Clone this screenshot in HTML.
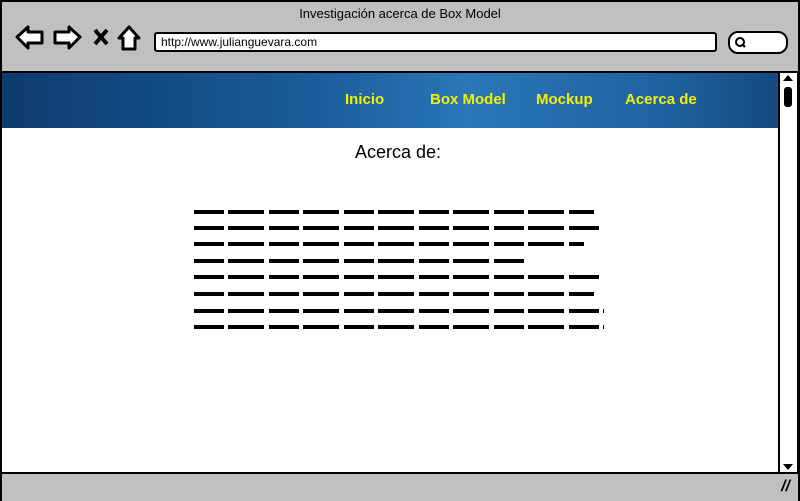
<!DOCTYPE html>
<html><head><style>
body{margin:0;width:800px;height:501px;overflow:hidden;font-family:"Liberation Sans",sans-serif;background:#fff;position:relative}
.frame{position:absolute;left:0;top:0;width:796px;height:497px;border:2px solid #000;background:#fff}
.top{position:absolute;left:2px;top:2px;width:796px;height:69px;background:#c0c0c0;border-bottom:2px solid #000}
.title{position:absolute;top:6px;width:800px;text-align:center;font-size:13px;color:#000}
.url{position:absolute;left:154px;top:32px;width:554px;height:16px;background:#fff;border:2px solid #000;border-radius:3px;font-size:12px;line-height:16px;padding-left:5px}
.search{position:absolute;left:728px;top:31px;width:56px;height:19px;background:#fff;border:2px solid #000;border-radius:10px}
.banner{position:absolute;left:2px;top:73px;width:776px;height:55px;background:linear-gradient(90deg,#0e3a6e,#1a5c9a 40%,#2a76b6 60%,#1f62a0 85%,#164a80);}
.nav{position:absolute;top:91px;color:#f4f000;font-size:15px;font-weight:bold}
.sb{position:absolute;left:778px;top:73px;width:17px;height:400px;background:#fff;border-left:2px solid #000;border-right:1px solid #000}
.bottom{position:absolute;left:2px;top:472px;width:796px;height:27px;background:#c0c0c0;border-top:2px solid #000}
.h{position:absolute;top:142px;width:796px;text-align:center;font-size:18px;left:0}
.ln{position:absolute;left:194px;height:4px;background:repeating-linear-gradient(90deg,#000 0 30px,transparent 30px 34px,#000 34px 70px,transparent 70px 75px);}
</style></head><body>
<div class="frame"></div>
<div class="top"></div>
<div class="title">Investigación acerca de Box Model</div>
<svg style="position:absolute;left:14px;top:24px" width="130" height="28" viewBox="0 0 130 28">
<path d="M3 13 L14 3 L14 8 L28 8 L28 19 L14 19 L14 24 Z" fill="#fff" stroke="#000" stroke-width="3" stroke-linejoin="round"/>
<path d="M66 13 L55 3 L55 8 L41 8 L41 19 L55 19 L55 24 Z" fill="#fff" stroke="#000" stroke-width="3" stroke-linejoin="round"/>
<path d="M81 6 L93 20 M93 6 L81 20" stroke="#000" stroke-width="4"/>
<path d="M115 3 L105 14 L109 14 L109 25 L121 25 L121 14 L125 14 Z" fill="#fff" stroke="#000" stroke-width="3" stroke-linejoin="round"/>
</svg>
<div class="url">http://www.julianguevara.com</div>
<div class="search"><svg width="20" height="19"><circle cx="10" cy="9" r="4" fill="none" stroke="#000" stroke-width="2"/><path d="M12 11 L15 14" stroke="#000" stroke-width="2"/></svg></div>
<div class="banner"></div>
<div class="nav" style="left:345px">Inicio</div>
<div class="nav" style="left:430px">Box Model</div>
<div class="nav" style="left:536px">Mockup</div>
<div class="nav" style="left:625px">Acerca de</div>
<div class="sb"><div style="position:absolute;left:3px;top:2px;width:0;height:0;border-left:5px solid transparent;border-right:5px solid transparent;border-bottom:6px solid #000"></div><div style="position:absolute;left:4px;top:14px;width:8px;height:20px;background:#000;border-radius:3px"></div><div style="position:absolute;left:3px;top:391px;border-left:5px solid transparent;border-right:5px solid transparent;border-top:6px solid #000"></div></div>
<div class="bottom"><span style="position:absolute;right:8px;top:4px;font-size:16px;font-weight:bold;font-style:italic">//</span></div>
<div class="h">Acerca de:</div>
<div class="ln" style="top:210px;width:400px"></div>
<div class="ln" style="top:226px;width:408px"></div>
<div class="ln" style="top:242px;width:390px"></div>
<div class="ln" style="top:259px;width:330px"></div>
<div class="ln" style="top:275px;width:408px"></div>
<div class="ln" style="top:292px;width:400px"></div>
<div class="ln" style="top:309px;width:410px"></div>
<div class="ln" style="top:325px;width:410px"></div>
</body></html>
